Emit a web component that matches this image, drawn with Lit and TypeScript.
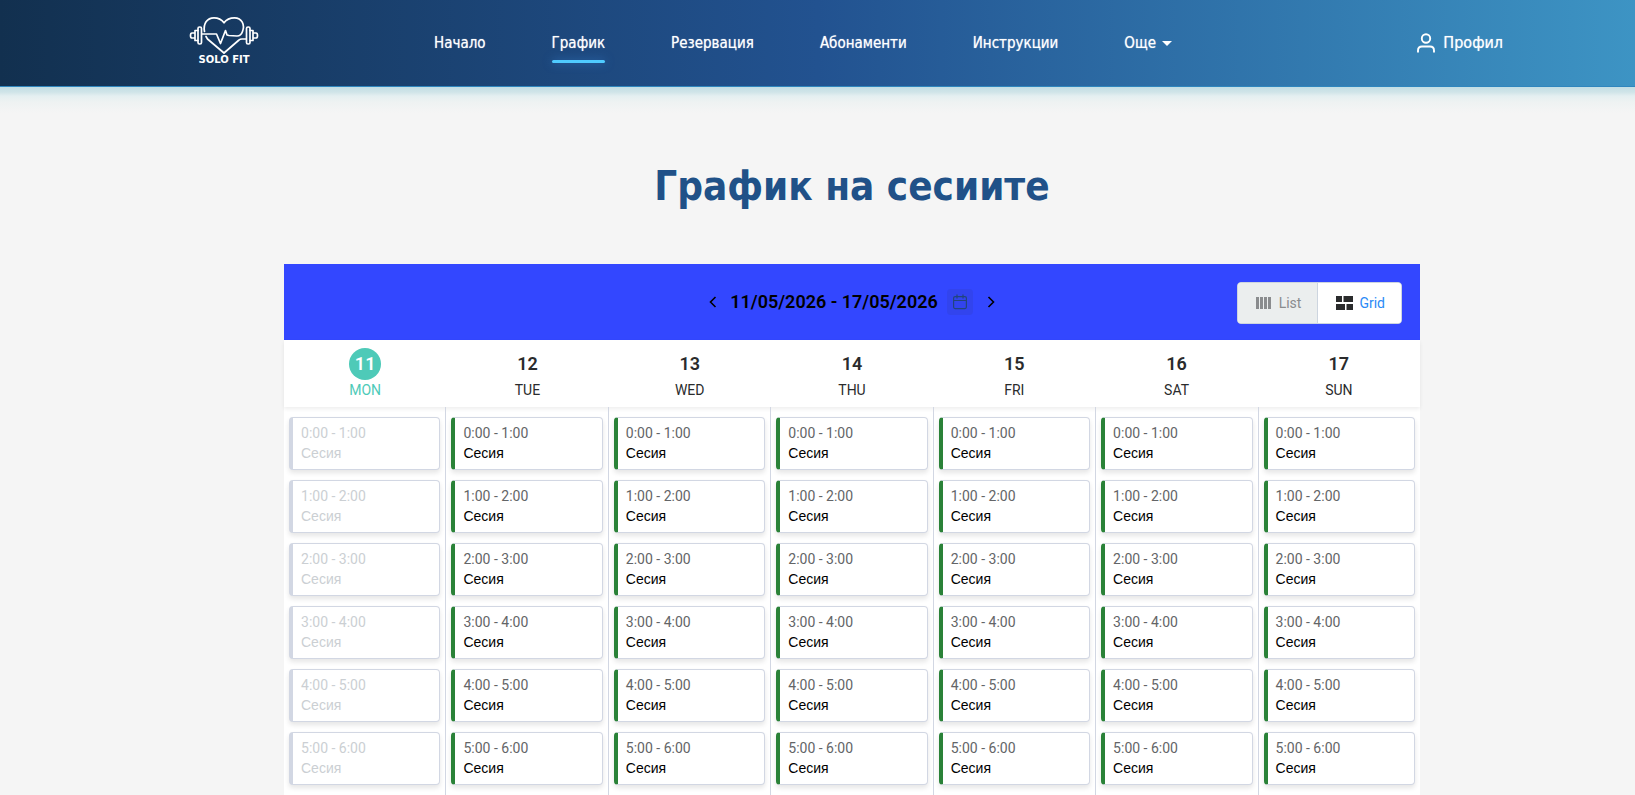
import { LitElement, html, css, svg } from "lit";
import { customElement, property, state } from "lit/decorators.js";
import { classMap } from "lit/directives/class-map.js";

interface Day {
  date: number;
  name: string;
  past?: boolean;
}

const DAYS: Day[] = [
  { date: 11, name: "MON", past: true },
  { date: 12, name: "TUE" },
  { date: 13, name: "WED" },
  { date: 14, name: "THU" },
  { date: 15, name: "FRI" },
  { date: 16, name: "SAT" },
  { date: 17, name: "SUN" },
];

const HOURS = [0, 1, 2, 3, 4, 5];

const NAV = ["Начало", "График", "Резервация", "Абонаменти", "Инструкции"];

const chevron = (points: string) => svg`
  <svg width="16" height="16" viewBox="0 0 16 16" fill="none" stroke="currentColor" stroke-width="1.6">
    <polyline points=${points}></polyline>
  </svg>`;

@customElement("site-header")
export class SiteHeader extends LitElement {
  @property() active = "График";

  static styles = css`
    :host {
      display: block;
      position: relative;
      font-family: "DejaVu Sans Condensed", "Noto Sans", sans-serif;
    }
    :host::after {
      content: "";
      position: absolute;
      top: 100%;
      left: 0;
      right: 0;
      height: 26px;
      background: linear-gradient(#c3dee5 0, #cfe4e8 5px, #e4eff1 9px, #eef2f2 15px, rgba(244, 244, 244, 0) 100%);
    }
    .bar {
      display: flex;
      align-items: center;
      box-sizing: border-box;
      height: 87px;
      padding: 0 132px 0 189px;
      color: #fff;
      background: linear-gradient(90deg, #12304f 0%, #225290 50%, #3d94c4 100%);
      border-bottom: 1px solid #2f86be;
    }
    .logo {
      display: flex;
      flex-direction: column;
      align-items: center;
      width: 70px;
      margin-bottom: 6px;
      color: #fff;
      text-decoration: none;
    }
    .brand {
      font: 700 10px/10px "DejaVu Sans", sans-serif;
    }
    .links {
      display: flex;
      gap: 66px;
      margin-left: 175px;
    }
    .link {
      position: relative;
      color: #fff;
      font-size: 15px;
      line-height: 24px;
      text-decoration: none;
      padding: 0;
      border: 0;
      background: none;
      font-family: inherit;
      text-shadow: 0 0 1px rgba(255, 255, 255, 0.7);
    }
    .active::after {
      content: "";
      position: absolute;
      left: 0;
      right: 0;
      bottom: -8px;
      height: 3px;
      border-radius: 2px;
      background: #4fcbff;
      box-shadow: 0 0 10px rgba(60, 140, 230, 0.6);
    }
    .more {
      display: flex;
      align-items: center;
      gap: 6px;
    }
    .caret {
      border: 5px solid transparent;
      border-top-color: currentColor;
      border-bottom: 0;
    }
    .profile {
      display: flex;
      align-items: center;
      gap: 7px;
      margin-left: auto;
      font-size: 16px;
    }
  `;

  render() {
    return html`
      <header class="bar">
        <a class="logo" href="#" aria-label="Solo Fit">
          <svg width="70" height="39" viewBox="0 0 70 39" fill="none" stroke="#fff" stroke-width="1.7" stroke-linejoin="round" stroke-linecap="round">
            <path d="M15.500 15.500 C14 8 18 1.800 25 1.800 C29.500 1.800 33 4 35 6.800 C37 4 41 1.800 45.500 1.800 C53 1.800 56 9 53.500 15.500 C52.500 18.500 51 20 48 20 L40 19.500 L38 19 L36.500 14.500 L31.500 27.500 L27.500 18 L13 18"></path>
            <path d="M17 20.500 L18.500 23 L35 37 L50 24 Q51 23 53 23 H57"></path>
            <rect x="9" y="11" width="3.500" height="17" rx="1.500"></rect>
            <path d="M9 14.500 H6 V24.500 H9 M6 17 H3 Q1.500 17 1.500 19.500 Q1.500 22 3 22 H6"></path>
            <rect x="57.500" y="11" width="3.500" height="17" rx="1.500"></rect>
            <path d="M61 14.500 H64 V24.500 H61 M64 17 H67 Q68.500 17 68.500 19.500 Q68.500 22 67 22 H64"></path>
          </svg>
          <span class="brand">SOLO FIT</span>
        </a>
        <nav class="links">
          ${NAV.map(
            (item) => html`<a href="#" class=${classMap({ link: true, active: item === this.active })}>${item}</a>`
          )}
          <button class="link more" type="button">Още <span class="caret"></span></button>
        </nav>
        <a class="link profile" href="#">
          <svg width="20" height="20" viewBox="0 0 20 20" fill="none" stroke="currentColor" stroke-width="1.900">
            <circle cx="10" cy="5.500" r="4.200"></circle>
            <path d="M2 19.500 V17.500 Q2 13.500 6 13.500 H14 Q18 13.500 18 17.500 V19.500"></path>
          </svg>
          Профил
        </a>
      </header>
    `;
  }
}

@customElement("week-schedule")
export class WeekSchedule extends LitElement {
  @state() private view: "list" | "grid" = "grid";

  static styles = css`
    :host {
      display: block;
      background: #fff;
      font-family: Roboto, sans-serif;
      color: #2a2b2c;
    }
    button {
      font-family: inherit;
      cursor: pointer;
    }
    .toolbar {
      display: grid;
      grid-template-columns: 1fr auto 1fr;
      align-items: center;
      box-sizing: border-box;
      height: 76px;
      padding: 0 18px;
      background: #3347ff;
    }
    .range {
      grid-column: 2;
      display: flex;
      align-items: center;
      color: #000;
    }
    .dates {
      margin: 0 9px;
      font-size: 18px;
      font-weight: 600;
      line-height: 26px;
    }
    .arrow,
    .calendar {
      display: grid;
      place-items: center;
      padding: 0;
      border: 0;
      background: none;
      color: #000;
    }
    .calendar {
      width: 26px;
      height: 26px;
      margin-right: 10px;
      border-radius: 4px;
      background: rgba(42, 43, 44, 0.08);
      color: #22457c;
    }
    .toggle {
      justify-self: end;
      display: flex;
      box-sizing: border-box;
      height: 42px;
      margin-top: 2px;
      overflow: hidden;
      border: 1px solid #cdd5df;
      border-radius: 4px;
      background: #fff;
    }
    .option {
      display: flex;
      align-items: center;
      gap: 6px;
      padding: 0 16px 0 17px;
      border: 0;
      background: #ebeeee;
      color: #8a8c8e;
      font-size: 14px;
    }
    .option + .option {
      border-left: 1px solid #cdd5df;
    }
    .selected {
      background: #fff;
      color: #2a8af6;
    }
    .selected svg {
      color: #2a2b2c;
    }
    .heads {
      display: grid;
      grid-template-columns: repeat(7, 1fr);
      box-shadow: 0 2px 4px rgba(0, 0, 0, 0.07);
    }
    .head {
      display: flex;
      flex-direction: column;
      align-items: center;
      padding: 8px 0 7px;
    }
    .date {
      width: 32px;
      border-radius: 50%;
      text-align: center;
      font-size: 18px;
      font-weight: 600;
      line-height: 32px;
    }
    .name {
      font-size: 14px;
      line-height: 20px;
    }
    .today .date {
      background: #4ecab8;
      color: #fff;
    }
    .today .name {
      color: #4ecab8;
    }
    .week {
      display: flex;
    }
    .column {
      flex: 1 1 0;
      display: flex;
      flex-direction: column;
      gap: 10px;
      padding: 10px 5px;
      border-right: 1px solid #d2d7e3;
    }
    .column:last-child {
      border-right: 0;
    }
    .slot {
      box-sizing: border-box;
      padding: 5px 8px 6px;
      border: 1px solid #d2d7e3;
      border-left: 4px solid #2a8238;
      border-radius: 4px;
      background: #fff;
      box-shadow: 0 3px 5px rgba(0, 0, 0, 0.1);
      text-align: left;
      font-size: 14px;
      line-height: 20px;
    }
    .time,
    .title {
      display: block;
    }
    .time {
      color: #636567;
    }
    .title {
      color: #000;
      font-family: "Liberation Sans", sans-serif;
    }
    .past {
      border-left-color: #d2d7e3;
      cursor: default;
    }
    .past .time,
    .past .title {
      color: #cbcfd3;
    }
  `;

  private option(view: "list" | "grid", label: string, icon: unknown) {
    return html`<button
      type="button"
      class=${classMap({ option: true, selected: this.view === view })}
      aria-pressed=${this.view === view}
      @click=${() => (this.view = view)}
    >
      ${icon}${label}
    </button>`;
  }

  render() {
    return html`
      <div class="toolbar">
        <div class="range">
          <button class="arrow" type="button" aria-label="Previous week">${chevron("10.5,3 5.5,8 10.5,13")}</button>
          <span class="dates">11/05/2026 - 17/05/2026</span>
          <button class="calendar" type="button" aria-label="Pick a date">
            <svg width="14" height="16" viewBox="0 0 14 16" fill="none" stroke="currentColor" stroke-width="1.200">
              <rect x="0.600" y="2.600" width="12.800" height="12" rx="1.500"></rect>
              <path d="M0.600 6.500 H13.400 M4 0.500 V4.500 M10 0.500 V4.500"></path>
            </svg>
          </button>
          <button class="arrow" type="button" aria-label="Next week">${chevron("5.5,3 10.5,8 5.5,13")}</button>
        </div>
        <div class="toggle" role="group" aria-label="View">
          ${this.option(
            "list",
            "List",
            html`<svg width="18" height="14" viewBox="0 0 18 14" fill="currentColor">
              <path d="M1 1h3v12H1zM5 1h3v12H5zM9 1h3v12H9zM13 1h3v12H13z"></path>
            </svg>`
          )}
          ${this.option(
            "grid",
            "Grid",
            html`<svg width="18" height="14" viewBox="0 0 18 14" fill="currentColor">
              <path d="M1 0h6v6H1zM8.500 0H18v6H8.500zM1 8h9v6H1zM11.500 8H18v6H11.500z"></path>
            </svg>`
          )}
        </div>
      </div>
      <div class="heads">
        ${DAYS.map(
          (day) => html`<div class=${classMap({ head: true, today: !!day.past })}>
            <span class="date">${day.date}</span>
            <span class="name">${day.name}</span>
          </div>`
        )}
      </div>
      <div class="week">
        ${DAYS.map(
          (day) => html`<div class="column">
            ${HOURS.map(
              (hour) => html`<button type="button" class=${classMap({ slot: true, past: !!day.past })}>
                <span class="time">${hour}:00 - ${hour + 1}:00</span>
                <span class="title">Сесия</span>
              </button>`
            )}
          </div>`
        )}
      </div>
    `;
  }
}

@customElement("app-root")
export class AppRoot extends LitElement {
  static styles = css`
    :host {
      display: block;
      min-height: 100vh;
      background: #f5f5f5;
    }
    .content {
      padding: 66px 215px 0 284px;
    }
    .heading {
      margin: 0 0 45px;
      color: #205188;
      font: 700 40px/66px "DejaVu Sans Condensed", "Noto Sans", sans-serif;
      text-align: center;
    }
  `;

  render() {
    return html`
      <site-header></site-header>
      <main class="content">
        <h1 class="heading">График на сесиите</h1>
        <week-schedule></week-schedule>
      </main>
    `;
  }
}
